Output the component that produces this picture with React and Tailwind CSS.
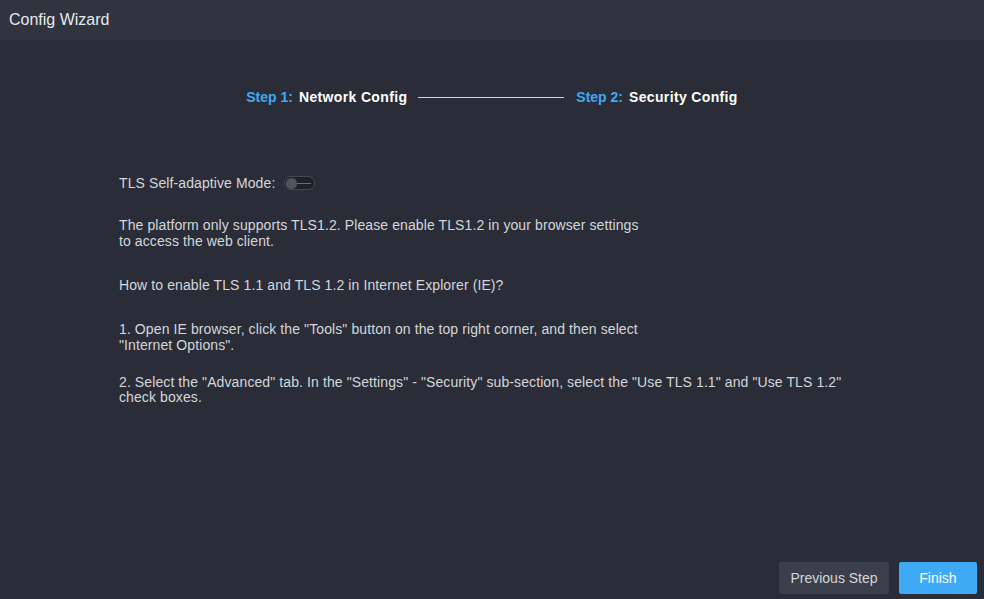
import React from 'react'

export default function App() {
  return (
    <div className="flex h-[599px] w-[984px] flex-col bg-[#2a2d38] font-['Liberation_Sans',Arial,sans-serif] text-[#d4d6da]">
      {/* Title bar */}
      <div className="flex h-[40px] items-center bg-[#30343f] px-[9px] text-[16px] text-[#e8e9eb]">
        Config Wizard
      </div>

      {/* Steps */}
      <div className="mt-[47px] flex items-center justify-center text-[14px] font-bold">
        <span className="text-[#3fa9f5]">Step 1:</span>
        <span className="ml-[6px] tracking-[0.35px] text-white">Network Config</span>
        <span className="mx-[11px] h-px w-[146px] bg-[#d0d2d6]" />
        <span className="ml-[1px] text-[#3fa9f5]">Step 2:</span>
        <span className="ml-[6px] tracking-[0.35px] text-white">Security Config</span>
      </div>

      {/* Content */}
      <div className="mt-[67px] flex flex-col pl-[119px] text-[14px] leading-[16px] tracking-[0.1px]">
        <div className="flex items-center">
          <span>TLS Self-adaptive Mode:</span>
          <span className="relative ml-[9px] flex h-[14px] w-[31px] items-center rounded-full border border-[#444955] bg-[#1e2129]">
            <span className="ml-[1px] h-[11px] w-[11px] rounded-full bg-[#50545e]" />
            <span className="h-px w-[14px] bg-[#6a6e78]" />
          </span>
        </div>
        <p className="mt-[26px]">
          The platform only supports TLS1.2. Please enable TLS1.2 in your browser settings
          <br />
          to access the web client.
        </p>
        <p className="mt-[28px]">How to enable TLS 1.1 and TLS 1.2 in Internet Explorer (IE)?</p>
        <p className="mt-[28px]">
          1. Open IE browser, click the "Tools" button on the top right corner, and then select
          <br />
          "Internet Options".
        </p>
        <p className="mt-[22px] leading-[15px]">
          2. Select the "Advanced" tab. In the "Settings" - "Security" sub-section, select the "Use TLS 1.1" and "Use TLS 1.2"
          <br />
          check boxes.
        </p>
      </div>

      {/* Footer buttons */}
      <div className="mt-auto mb-[5px] flex justify-end gap-[10px] pr-[7px]">
        <button className="h-[32px] w-[110px] rounded-[2px] bg-[#3b3f4b] text-[14px] text-[#d4d6da]">
          Previous Step
        </button>
        <button className="h-[32px] w-[78px] rounded-[2px] bg-[#3eaaf5] text-[14px] text-white">
          Finish
        </button>
      </div>
    </div>
  )
}
